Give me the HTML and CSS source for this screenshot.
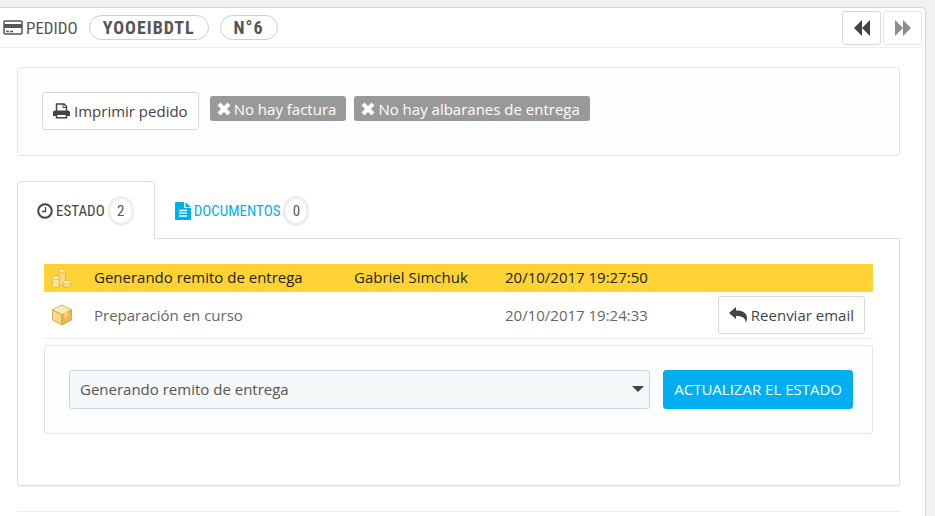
FILE: index.html
```
<!DOCTYPE html>
<html lang="es">
<head>
    <meta charset="UTF-8">
    <title>Pedido YOOEIBDTL</title>
    <link rel="stylesheet" href="styles.css">
</head>
<body>
<div class="panel">
    <div class="panel-heading">
        <svg class="icon-card" viewBox="0 0 20 15" width="20" height="15"><rect x="1" y="1" width="18" height="13" rx="1" fill="#fff" stroke="#555" stroke-width="1.5"/><path d="M1 4h18v4H1z" fill="#555"/><path d="M3 11.5h3M7 11.5h3" stroke="#555" stroke-width="1.5"/></svg>
        <span class="title">PEDIDO</span>
        <span class="pill">YOOEIBDTL</span>
        <span class="pill">N°6</span>
        <div class="nav-btns">
            <button type="button" class="btn btn-nav" aria-label="Anterior"><svg viewBox="0 0 16 16" width="16" height="16"><path d="M8 0v16L0 8zM16 0v16L8 8z" fill="currentColor"/></svg></button>
            <button type="button" class="btn btn-nav" aria-label="Siguiente" disabled><svg viewBox="0 0 16 16" width="16" height="16"><path d="M0 0v16l8-8zM8 0v16l8-8z" fill="currentColor"/></svg></button>
        </div>
    </div>
    <div class="content">
        <div class="well tools">
            <button type="button" class="btn btn-print">
                <svg viewBox="0 0 17 16" width="17" height="16"><path d="M3.500 8V1H11l2.500 2.500V8" fill="#fff" stroke="#444" stroke-width="1.500"/><path d="M10 1v3.500h3.500" fill="none" stroke="#444"/><path d="M2 7.500h13a2 2 0 0 1 2 2V13H0V9.500a2 2 0 0 1 2-2z" fill="#444"/><path d="M3.500 11.200h10v3.500h-10z" fill="#fff" stroke="#444" stroke-width="1.500"/></svg>
                <span>Imprimir pedido</span>
            </button>
            <span class="label"><svg viewBox="0 0 14 14" width="14" height="14"><path d="M2 2l10 10M12 2L2 12" stroke="#fff" stroke-width="4.200"/></svg>No hay factura</span>
            <span class="label"><svg viewBox="0 0 14 14" width="14" height="14"><path d="M2 2l10 10M12 2L2 12" stroke="#fff" stroke-width="4.200"/></svg>No hay albaranes de entrega</span>
        </div>

        <div class="tabs">
            <a href="#estado" class="tab active">
                <svg viewBox="0 0 16 16" width="16" height="16"><circle cx="8" cy="8" r="6.800" fill="none" stroke="#444" stroke-width="2"/><path d="M8.500 4v4.500H5" fill="none" stroke="#444" stroke-width="1.300"/></svg>
                ESTADO <span class="badge">2</span>
            </a>
            <a href="#documentos" class="tab">
                <svg viewBox="0 0 16 18" width="16" height="18"><path d="M1 0h8v6h7v11a1 1 0 0 1-1 1H1a1 1 0 0 1-1-1V1a1 1 0 0 1 1-1zM10.500 0L16 5h-5.500z" fill="#00aff0"/><path d="M4 8.500h8M4 11.200h8M4 14h8" stroke="#fff" stroke-width="1.300"/></svg>
                DOCUMENTOS <span class="badge">0</span>
            </a>
        </div>
        <div class="tab-content" id="estado">
            <table class="history">
                <colgroup><col class="c-icon"><col class="c-state"><col class="c-user"><col class="c-date"><col></colgroup>
                <tbody>
                <tr class="current">
                    <td><svg viewBox="0 0 22 22" width="22" height="22"><g stroke="#e0a838" stroke-width=".7"><path d="M8 3.500v14c1.500 1.800 5 1.800 6.500 0v-14" fill="#f8dc80"/><ellipse cx="11.200" cy="3.700" rx="3.300" ry="1.700" fill="#fff0ac"/><path d="M1 10.500v8.500c1.500 2 6 2 7.500 0v-8.500" fill="#fae193"/><ellipse cx="4.800" cy="10.700" rx="3.800" ry="1.800" fill="#fff3ba"/><path d="M12 15v4c1.800 2 6.500 2 8.300 0v-4" fill="#f8dc80"/><ellipse cx="16.200" cy="15.200" rx="4.200" ry="2" fill="#fff0ac"/></g></svg></td>
                    <td>Generando remito de entrega</td>
                    <td>Gabriel Simchuk</td>
                    <td>20/10/2017 19:27:50</td>
                    <td></td>
                </tr>
                <tr>
                    <td><svg viewBox="0 0 22 22" width="22" height="22"><g stroke="#c99a45" stroke-width=".8" stroke-linejoin="round"><path d="M11 1l9.500 4.800L11 11 1.500 5.800z" fill="#ffebab"/><path d="M1.500 5.800L11 11v10l-9.500-5z" fill="#f8d98a"/><path d="M20.500 5.800L11 11v10l9.500-5z" fill="#efb94e"/></g><path d="M7 3l9.500 5v4.500l-3 1.500V9.500L4 4.500z" fill="#fff6cf" opacity=".5"/></svg></td>
                    <td>Preparación en curso</td>
                    <td></td>
                    <td>20/10/2017 19:24:33</td>
                    <td class="actions">
                        <button type="button" class="btn btn-mail">
                            <svg viewBox="0 0 18 16" width="18" height="16"><path d="M0 6l7-6v3.500c7 0 11 2.500 11 7.500 0 2-.6 3.500-1.500 5 .3-5-2.500-7-9.500-7V12z" fill="#444"/></svg>
                            <span>Reenviar email</span>
                        </button>
                    </td>
                </tr>
                </tbody>
            </table>
            <form class="well state-form">
                <div class="select-wrap">
                    <select class="state-select" aria-label="Estado">
                        <option>Generando remito de entrega</option>
                        <option>Preparación en curso</option>
                    </select>
                </div>
                <button type="button" class="btn btn-primary">ACTUALIZAR EL ESTADO</button>
            </form>
        </div>
        <hr>
    </div>
</div>
</body>
</html>
```

FILE: styles.css
```
*{
    box-sizing: border-box;
}
body{
    margin: 0;
    padding: 7px 9px 0 0;
    background: #eff1f2;
    color: #666;
    font: 15px/20px "Open Sans", sans-serif;
}
svg{
    flex: none;
    display: block;
}
.panel{
    background: #fff;
    border: 1px solid #d3d8db;
    border-left: 0;
    border-bottom: 0;
    border-radius: 0 5px 0 0;
}
.panel-heading{
    display: flex;
    align-items: center;
    height: 40px;
    margin-right: 3px;
    padding-left: 3px;
    border-bottom: 1px solid #eee;
    color: #555;
    font-family: "Ubuntu Condensed", "Roboto Condensed", Roboto, sans-serif;
    font-size: 17px;
}
.title{
    margin: 0 11px 0 3px;
}
.pill{
    height: 25px;
    margin-right: 11px;
    padding: 0 13px;
    border: 1px solid #ccced7;
    border-radius: 13px;
    font-size: 18px;
    font-weight: bold;
    line-height: 23px;
    letter-spacing: 1px;
}
.nav-btns{
    display: flex;
    gap: 2px;
    margin-left: auto;
}
.btn{
    display: inline-flex;
    align-items: center;
    justify-content: center;
    height: 38px;
    border: 1px solid #d6dade;
    border-radius: 3px;
    background: #fff;
    color: #444;
    font: 15px/20px "Open Sans", sans-serif;
    white-space: nowrap;
    cursor: pointer;
}
.btn-nav{
    width: 39px;
    height: 34px;
    padding: 0;
}
.btn-nav:disabled{
    color: #8c8c8c;
    border-color: #e3e6e8;
    cursor: default;
}
.content{
    padding: 19px 25px 4px 17px;
}
.well{
    background: #fcfdfe;
    border: 1px solid #e1e7ee;
    border-radius: 3px;
}
.tools{
    display: flex;
    align-items: flex-start;
    height: 89px;
    padding: 24px;
}
.btn-print{
    gap: 4px;
    margin-right: 11px;
    padding: 0 10px;
}
.label{
    display: flex;
    align-items: center;
    gap: 3px;
    height: 25px;
    margin: 4px 8px 0 0;
    padding: 0 10px 0 7px;
    border-radius: 3px;
    background: #999;
    color: #fff;
    white-space: nowrap;
}
.tabs{
    display: flex;
    margin-top: 25px;
}
.tab{
    display: flex;
    align-items: center;
    gap: 3px;
    height: 58px;
    margin-bottom: -1px;
    padding: 0 20px 0 19px;
    border: 1px solid transparent;
    border-bottom: 0;
    border-radius: 4px 4px 0 0;
    color: #00aff0;
    font-family: "Ubuntu Condensed", "Roboto Condensed", Roboto, sans-serif;
    font-size: 15px;
    text-decoration: none;
}
.tab.active{
    background: #fff;
    border-color: #ddd;
    color: #444;
}
.badge{
    width: 26px;
    height: 30px;
    border: 3px solid #eee;
    border-radius: 13px;
    color: #555;
    line-height: 24px;
    text-align: center;
}
.tab-content{
    padding: 25px 26px 51px;
    border: 1px solid #ddd;
    border-radius: 0 0 3px 3px;
    box-shadow: 0 1px 1px #eee;
}
.history{
    width: 100%;
    border-collapse: collapse;
    table-layout: fixed;
}
.history td{
    height: 46px;
    padding: 0 8px 0 0;
    border-bottom: 1px solid #eaedef;
    white-space: nowrap;
}
.history .current td{
    height: 28px;
    padding-bottom: 2px;
    border: 0;
    background: #ffd335;
    color: #222;
}
.history td:first-child,
.history .current td:first-child{
    padding: 0 0 0 7px;
}
.c-icon{
    width: 50px;
}
.c-state{
    width: 260px;
}
.c-user{
    width: 151px;
}
.c-date{
    width: 180px;
}
.history .actions{
    text-align: right;
}
.btn-mail{
    gap: 4px;
    padding: 0 10px;
    vertical-align: middle;
}
.state-form{
    display: flex;
    gap: 13px;
    margin-top: 6px;
    padding: 24px 19px 24px 24px;
}
.select-wrap{
    position: relative;
    flex: 1;
}
.select-wrap:after{
    content: "";
    position: absolute;
    right: 6px;
    top: 16px;
    border: 6px solid transparent;
    border-top-color: #444;
    border-bottom: 0;
    pointer-events: none;
}
.state-select{
    display: block;
    width: 100%;
    height: 39px;
    padding: 0 10px;
    border: 1px solid #c7d6db;
    border-radius: 3px;
    background: #f5f8f9;
    color: #555;
    font: 15px/20px "Open Sans", sans-serif;
    appearance: none;
}
.btn-primary{
    height: 39px;
    padding: 0 10px;
    border-color: #00aff0;
    background: #00aff0;
    color: #fff;
}
hr{
    height: 1px;
    margin: 25px 0 0;
    border: 0;
    background: #eee;
}
```
